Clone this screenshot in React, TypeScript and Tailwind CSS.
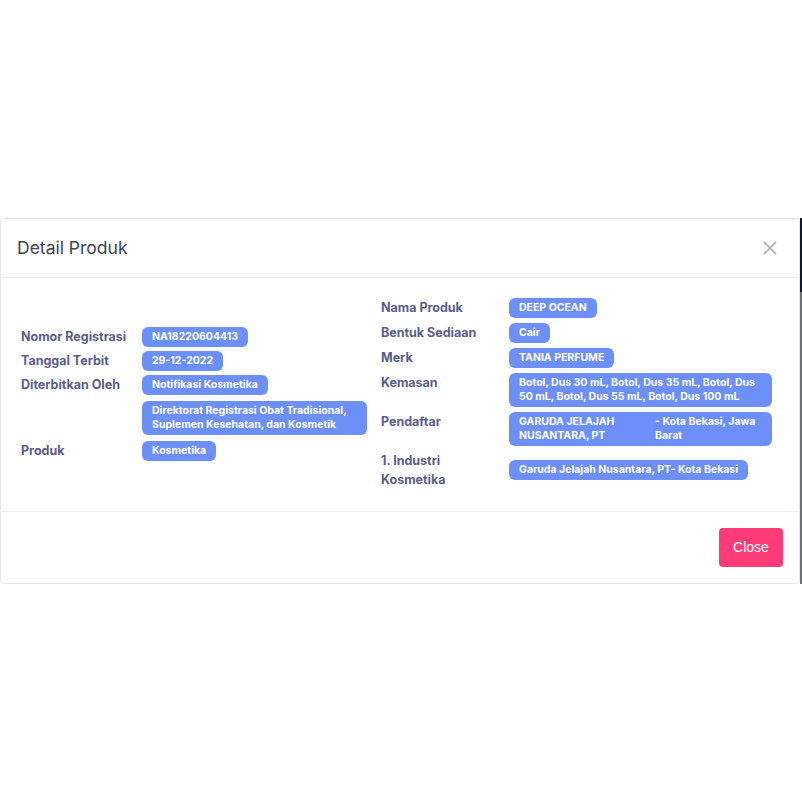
import React from "react";

const kiri = [
  { label: "Nomor Registrasi", value: "NA18220604413", gap: "mt-0" },
  { label: "Tanggal Terbit", value: "29-12-2022", gap: "mt-[4px]" },
  { label: "Diterbitkan Oleh", value: "Notifikasi Kosmetika", gap: "mt-[4px]" },
  { label: "", value: "Direktorat Registrasi Obat Tradisional, Suplemen Kesehatan, dan Kosmetik", gap: "mt-[6px]" },
  { label: "Produk", value: "Kosmetika", gap: "mt-[6px]" },
];

function Badge({ children }: { children: React.ReactNode }) {
  return (
    <span className="inline-block rounded-[6px] bg-[#6d8ff8] px-[10px] py-[3px] text-[10.5px] font-bold leading-[14px] text-white">
      {children}
    </span>
  );
}

function Baris({
  label,
  children,
  lebar,
  center = false,
  className = "",
}: {
  label: string;
  children: React.ReactNode;
  lebar: string;
  center?: boolean;
  className?: string;
}) {
  return (
    <div className={`flex ${center ? "items-center" : "items-start"} ${className}`}>
      <div className={`${lebar} shrink-0 pr-[8px] text-[12.5px] font-bold leading-[19px] text-[#595d8b]`}>{label}</div>
      <div className="flex flex-1 leading-none">{children}</div>
    </div>
  );
}

export default function App() {
  return (
    <div className="min-h-[802px] bg-white font-['Inter',sans-serif]">
      <div className="h-[218px]" />
      <div className="flex">
        {/* Modal */}
        <div className="w-[800px] rounded-[4px] border border-[#e4e6ef] bg-white">
          {/* Header */}
          <div className="flex h-[59px] items-center justify-between border-b border-[#ebedf3] pl-[16px] pr-[22px]">
            <h2 className="text-[17.5px] font-normal text-[#3f4254]">Detail Produk</h2>
            <svg width="14" height="14" viewBox="0 0 14 14" className="text-[#a1a5b7]">
              <path d="M1 1L13 13M13 1L1 13" stroke="currentColor" strokeWidth="1.5" />
            </svg>
          </div>

          {/* Body */}
          <div className="flex items-center gap-[14px] pb-[22px] pl-[20px] pr-[27px] pt-[20px]">
            <div className="flex w-[346px] flex-col">
              {kiri.map((r, i) => (
                <Baris key={i} label={r.label} lebar="w-[121px]" className={r.gap}>
                  <Badge>{r.value}</Badge>
                </Baris>
              ))}
            </div>

            <div className="flex flex-1 flex-col gap-[5px]">
              <Baris label="Nama Produk" lebar="w-[128px]">
                <Badge>DEEP OCEAN</Badge>
              </Baris>
              <Baris label="Bentuk Sediaan" lebar="w-[128px]">
                <Badge>Cair</Badge>
              </Baris>
              <Baris label="Merk" lebar="w-[128px]">
                <Badge>TANIA PERFUME</Badge>
              </Baris>
              <Baris label="Kemasan" lebar="w-[128px]">
                <Badge>Botol, Dus 30 mL, Botol, Dus 35 mL, Botol, Dus 50 mL, Botol, Dus 55 mL, Botol, Dus 100 mL</Badge>
              </Baris>
              <Baris label="Pendaftar" lebar="w-[128px]">
                <span className="grid w-full grid-cols-[136px_1fr] rounded-[6px] bg-[#6d8ff8] px-[10px] py-[3px] text-[10.5px] font-bold leading-[14px] text-white">
                  <span>GARUDA JELAJAH NUSANTARA, PT</span>
                  <span>- Kota Bekasi, Jawa Barat</span>
                </span>
              </Baris>
              <Baris label="1. Industri Kosmetika" lebar="w-[128px]" center>
                <Badge>Garuda Jelajah Nusantara, PT- Kota Bekasi</Badge>
              </Baris>
            </div>
          </div>

          {/* Footer */}
          <div className="flex h-[72px] items-center justify-end border-t border-[#ebedf3] pr-[16px]">
            <button className="h-[39px] w-[64px] rounded-[4px] bg-[#ff3b78] font-['Liberation_Sans',sans-serif] text-[14px] text-white">
              Close
            </button>
          </div>
        </div>

        {/* page edge */}
        <div className="flex w-[2px] flex-col">
          <div className="h-[74px] bg-[#111827]" />
          <div className="flex-1 bg-[#6b6f76]" />
        </div>
      </div>
    </div>
  );
}
